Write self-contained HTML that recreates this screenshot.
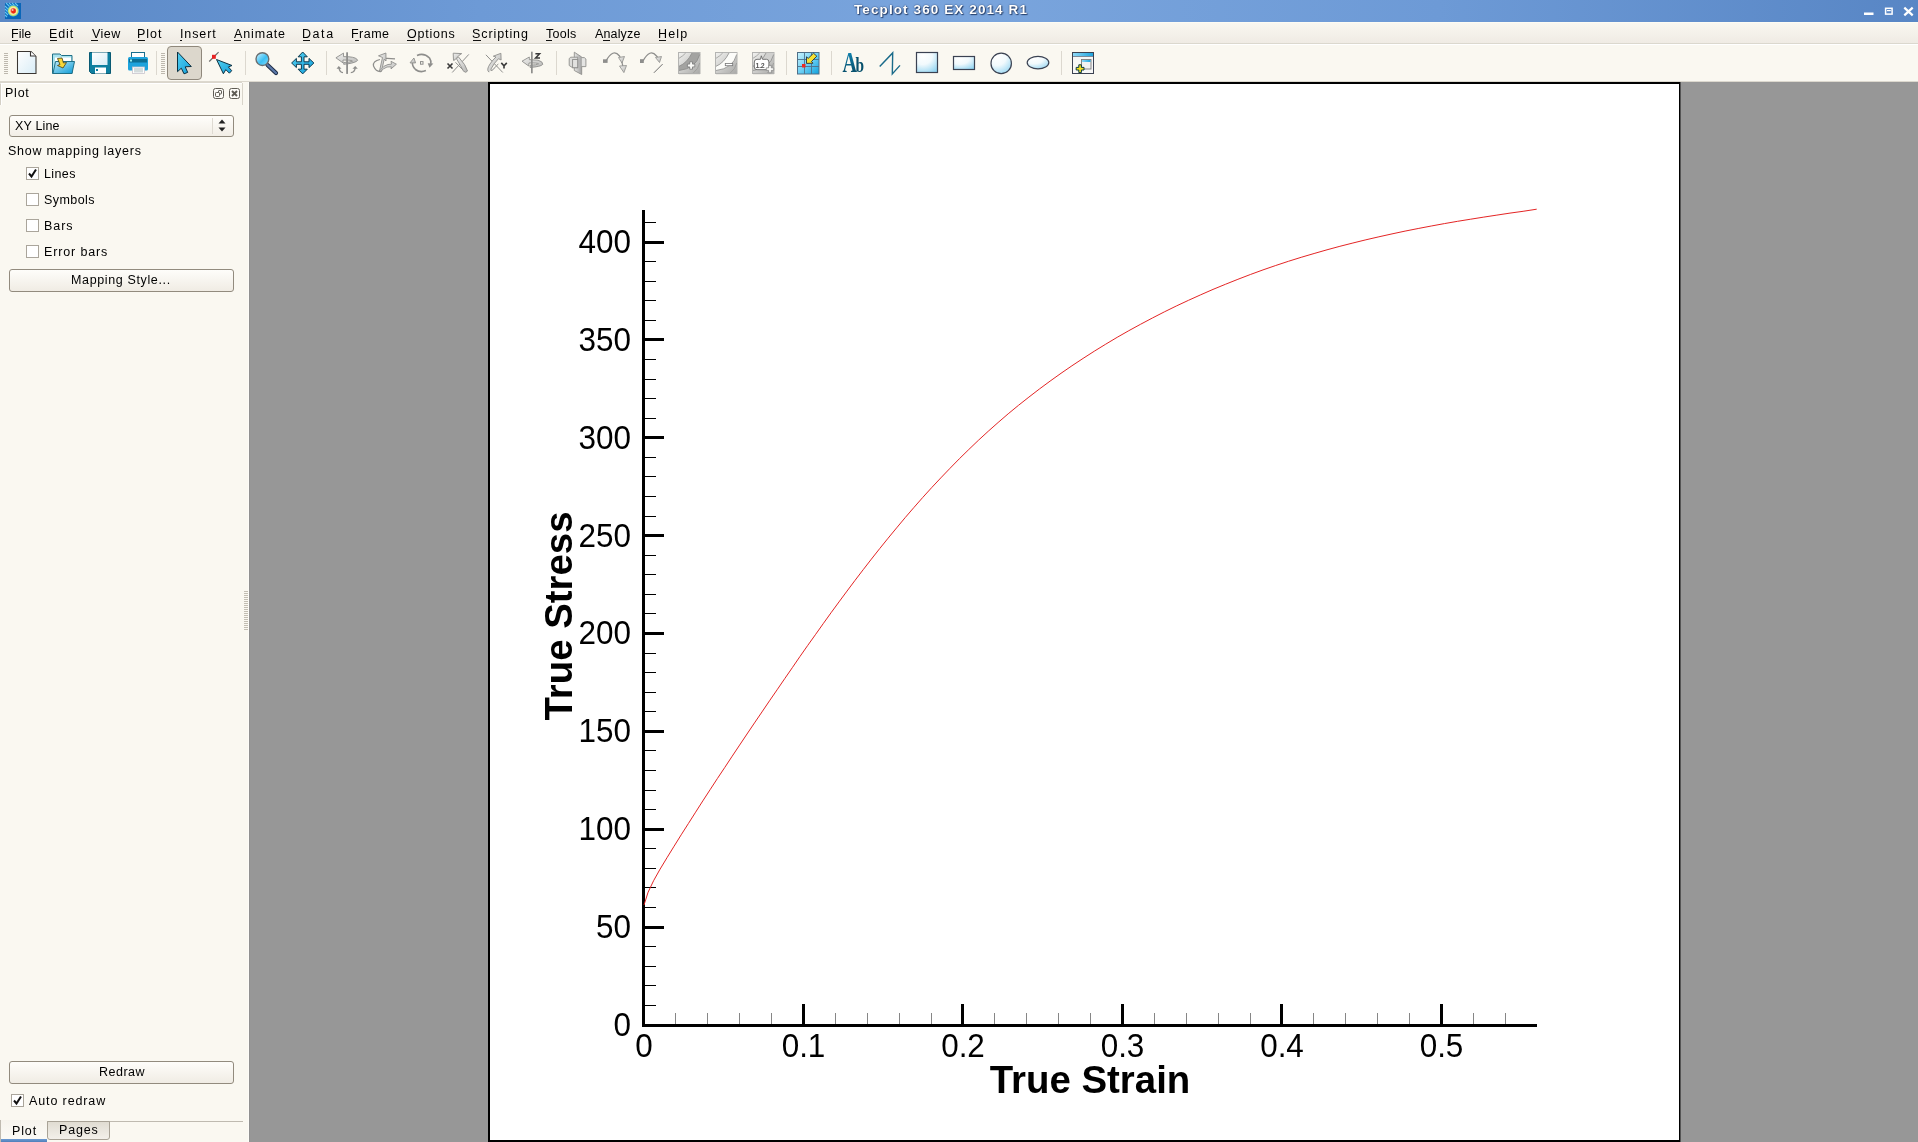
<!DOCTYPE html>
<html><head><meta charset="utf-8"><title>Tecplot 360 EX 2014 R1</title>
<style>
html,body{margin:0;padding:0}
body{width:1918px;height:1142px;overflow:hidden;position:relative;background:#979797;font-family:"Liberation Sans",sans-serif}
.a{position:absolute}
.t{position:absolute;white-space:nowrap;font-family:"Liberation Sans",sans-serif;will-change:transform}
</style></head><body>
<div class="a" style="left:0;top:0;width:1918px;height:22px;background:linear-gradient(90deg,#5a88c6 0%,#6d9ad6 25%,#7aa5dd 50%,#6d9ad6 75%,#5886c5 100%)"></div>
<div class="a" style="left:0;top:22px;width:1918px;height:21px;background:linear-gradient(#faf8f1,#efebe4)"></div>
<div class="a" style="left:0;top:22px;width:1918px;height:1px;background:#fdfcf4"></div>
<div class="a" style="left:0;top:43px;width:1918px;height:1px;background:#dbd8ce"></div>
<div class="a" style="left:0;top:44px;width:1918px;height:37px;background:#faf8f1"></div>
<div class="a" style="left:0;top:44px;width:1918px;height:1px;background:#ffffff"></div>
<div class="a" style="left:0;top:81px;width:1918px;height:1px;background:#dcd8ce"></div>
<div class="a" style="left:0;top:82px;width:249px;height:1060px;background:#faf8f1"></div>
<div class="a" style="left:248px;top:82px;width:1px;height:1060px;background:#fdfcf8"></div>
<div class="a" style="left:249px;top:82px;width:1669px;height:1060px;background:#979797"></div>
<div class="a" style="left:249px;top:82px;width:1px;height:1060px;background:#919191"></div>
<div class="a" style="left:0;top:82px;width:242px;height:1px;background:#dad6cc"></div>
<div class="a" style="left:488px;top:82px;width:1192px;height:1060px;box-sizing:border-box;background:#fff;border:2px solid #000;border-right-width:1px"></div>
<div class="a" style="left:1680px;top:82px;width:1px;height:1060px;background:#555"></div>
<svg class="a" style="left:0;top:0;will-change:transform" width="1918" height="90" viewBox="0 0 1918 90" font-family='"Liberation Sans", sans-serif'><defs>
<linearGradient id="gDoc" x1="0" y1="0" x2="1" y2="1"><stop offset="0" stop-color="#ffffff"/><stop offset="1" stop-color="#d8ecf6"/></linearGradient>
<linearGradient id="gBlue" x1="0" y1="0" x2="1" y2="1"><stop offset="0" stop-color="#bfeaf8"/><stop offset="1" stop-color="#0a9ad6"/></linearGradient>
<linearGradient id="gBlue2" x1="0" y1="0" x2="0" y2="1"><stop offset="0" stop-color="#45c3ee"/><stop offset="1" stop-color="#1196cf"/></linearGradient>
<linearGradient id="gCyan" x1="0" y1="0" x2="1" y2="1"><stop offset="0" stop-color="#54d0ef"/><stop offset="1" stop-color="#139fdc"/></linearGradient>
<linearGradient id="gShape" x1="0" y1="0" x2="0" y2="1"><stop offset="0" stop-color="#ffffff"/><stop offset="1" stop-color="#a9def4"/></linearGradient>
<linearGradient id="gGray" x1="0" y1="0" x2="1" y2="1"><stop offset="0" stop-color="#f2f2f0"/><stop offset="1" stop-color="#a8a8a6"/></linearGradient>
<linearGradient id="gGray2" x1="0" y1="0" x2="1" y2="0"><stop offset="0" stop-color="#e8e8e6"/><stop offset="1" stop-color="#a0a0a0"/></linearGradient>
<linearGradient id="gGray3" x1="0" y1="0" x2="1" y2="1"><stop offset="0" stop-color="#f0f0ee"/><stop offset="1" stop-color="#b8b8b6"/></linearGradient>
<linearGradient id="gAb" x1="0" y1="0" x2="0" y2="1"><stop offset="0" stop-color="#1592c4"/><stop offset=".6" stop-color="#0a5f80"/><stop offset="1" stop-color="#07445c"/></linearGradient>
<linearGradient id="gLens" x1="0" y1="0" x2="1" y2="1"><stop offset="0" stop-color="#d6f4ff"/><stop offset=".55" stop-color="#3cc0f4"/><stop offset="1" stop-color="#88dcfa"/></linearGradient>
<radialGradient id="gLogo" cx=".5" cy=".5" r=".5"><stop offset="0" stop-color="#ff3010"/><stop offset=".4" stop-color="#f0a080"/><stop offset=".55" stop-color="#faf0a0"/><stop offset=".75" stop-color="#b8e070"/><stop offset=".88" stop-color="#40b0e0" stop-opacity=".9"/><stop offset="1" stop-color="#0a66b8" stop-opacity="0"/></radialGradient>
</defs><rect x="5" y="3" width="16" height="16" fill="#0a66b8"/><path d="M6,3 L10,7 M9,3 L14,8 M12,3 L16,7 M15,3 L18,6 M5,6 L9,10 M5,9 L8,12 M5,12 L8,15 M5,15 L7,17" stroke="#62c6f2" stroke-width="1.1"/><circle cx="13.2" cy="10.8" r="6.3" fill="url(#gLogo)"/><circle cx="13.5" cy="11" r="2.4" fill="#ee2a10"/><circle cx="12.6" cy="10" r="1" fill="#f4c0b0"/><rect x="1864" y="12.5" width="9.5" height="2.5" fill="#fff"/><rect x="1885.6" y="8.3" width="6.5" height="5.8" fill="none" stroke="#fff" stroke-width="1.5"/><rect x="1887" y="10" width="3.8" height="1.2" fill="#fff"/><path d="M1904.3,7.6 L1912.7,15.4 M1912.7,7.6 L1904.3,15.4" stroke="#fff" stroke-width="2.2"/><rect x="4" y="53" width="4" height="1" fill="#bdb8ae"/><rect x="4" y="55" width="4" height="1" fill="#bdb8ae"/><rect x="4" y="57" width="4" height="1" fill="#bdb8ae"/><rect x="4" y="59" width="4" height="1" fill="#bdb8ae"/><rect x="4" y="61" width="4" height="1" fill="#bdb8ae"/><rect x="4" y="63" width="4" height="1" fill="#bdb8ae"/><rect x="4" y="65" width="4" height="1" fill="#bdb8ae"/><rect x="4" y="67" width="4" height="1" fill="#bdb8ae"/><rect x="4" y="69" width="4" height="1" fill="#bdb8ae"/><rect x="4" y="71" width="4" height="1" fill="#bdb8ae"/><rect x="4" y="73" width="4" height="1" fill="#bdb8ae"/><rect x="161" y="53" width="4" height="1" fill="#bdb8ae"/><rect x="161" y="55" width="4" height="1" fill="#bdb8ae"/><rect x="161" y="57" width="4" height="1" fill="#bdb8ae"/><rect x="161" y="59" width="4" height="1" fill="#bdb8ae"/><rect x="161" y="61" width="4" height="1" fill="#bdb8ae"/><rect x="161" y="63" width="4" height="1" fill="#bdb8ae"/><rect x="161" y="65" width="4" height="1" fill="#bdb8ae"/><rect x="161" y="67" width="4" height="1" fill="#bdb8ae"/><rect x="161" y="69" width="4" height="1" fill="#bdb8ae"/><rect x="161" y="71" width="4" height="1" fill="#bdb8ae"/><rect x="161" y="73" width="4" height="1" fill="#bdb8ae"/><rect x="156" y="51" width="1" height="24" fill="#dcd8cf"/><rect x="245" y="51" width="1" height="24" fill="#dcd8cf"/><rect x="326" y="51" width="1" height="24" fill="#dcd8cf"/><rect x="556" y="51" width="1" height="24" fill="#dcd8cf"/><rect x="786" y="51" width="1" height="24" fill="#dcd8cf"/><rect x="831" y="51" width="1" height="24" fill="#dcd8cf"/><rect x="1061" y="51" width="1" height="24" fill="#dcd8cf"/><rect x="167.5" y="46.5" width="34" height="33" rx="3.5" fill="#dcd7cc" stroke="#8f887c" stroke-width="1"/><path d="M17.5,51.5 H31 L36,56.5 V73.5 H17.5 Z" fill="url(#gDoc)" stroke="#3a3632" stroke-width="1.05"/><path d="M30.5,51.5 V56 H35.5" fill="#fff" stroke="#3a3632" stroke-width="1.1"/><path d="M52.5,73.5 V54 H60 L61.5,55.5 H72 V73.5 Z" fill="#a8e2ee" stroke="#1f6f86" stroke-width="1"/><rect x="55" y="57.5" width="16" height="5" fill="#fff"/><path d="M53,73.5 L55.5,61.5 H74.5 L72,73.5 Z" fill="url(#gBlue)" stroke="#1f6f86" stroke-width="1"/><path d="M57.5,58.5 L62,58 L63.5,63 L66.5,62.5 L63,68 L57.5,65.5 L60,64.5 Z" fill="#f7d83a" stroke="#4a3d10" stroke-width=".8"/><path d="M89.5,52.5 H110.5 V73.5 H91.5 L89.5,71.5 Z" fill="#0e7fa0" stroke="#0a5a73" stroke-width="1"/><rect x="92" y="52.5" width="15.5" height="12.5" fill="url(#gDoc)"/><rect x="95" y="67.5" width="11" height="6" fill="#fff"/><rect x="96" y="69" width="2" height="2" fill="#0e7fa0"/><rect x="131.5" y="52.5" width="13" height="6" fill="#fff" stroke="#1a6f8e" stroke-width="1"/><rect x="128" y="57" width="20" height="13.5" rx="1.5" fill="#1ea3dc"/><rect x="129" y="59" width="18" height="3.5" fill="#0d6f94"/><rect x="130" y="59.5" width="2" height="2" fill="#9ee"/><rect x="132.5" y="67" width="12" height="6.5" fill="#fff" stroke="#c8c4cc" stroke-width=".8"/><rect x="134" y="68" width="9" height="4.5" fill="#d4dcdc"/><path d="M177.5,52 V71.7 L181.3,68.2 L184,73.8 L187.7,72.4 L185.2,66.8 L191.3,66.5 Z" fill="url(#gCyan)" stroke="#0c2f40" stroke-width="1"/><path d="M209.2,61.5 L218.6,52.1" stroke="#6a6a6a" stroke-width="1.2"/><rect x="212" y="54.8" width="3.8" height="4" fill="#e82222"/><path d="M216.5,59.5 L232,65.5 L228.4,66.9 L231.7,70.7 L229.4,73.2 L225.8,69.6 L223.4,73.8 Z" fill="url(#gCyan)" stroke="#0c2f40" stroke-width="1"/><path d="M267.5,65 L276,73" stroke="#1c2a44" stroke-width="4.2" stroke-linecap="round"/><path d="M267.5,65 L276,73" stroke="#5a78a8" stroke-width="2.4" stroke-linecap="round"/><circle cx="262.4" cy="59.1" r="6.4" fill="url(#gLens)" stroke="#6a6e70" stroke-width="1.4"/><path d="M302.7,52 L307.3,56.8 H304 V61.8 H309 V58.4 L313.9,63 L309,67.6 V64.3 H304 V69.2 H307.3 L302.7,73.9 L298.1,69.2 H301.4 V64.3 H296.4 V67.6 L291.6,63 L296.4,58.4 V61.8 H301.4 V56.8 H298.1 Z" fill="url(#gCyan)" stroke="#0d3a50" stroke-width="1" stroke-linejoin="miter"/><path d="M343.7,64.3 L348,63.8 Q356,62.5 357.6,60.4 Q357,57.5 349,56.8 L343.5,56.6 V53.1 L335.9,57.8 L343,62.9 V60 L349,60.2 Q353,60.5 352.5,61.2 Q350,62.3 343.7,62.5 Z" fill="url(#gGray3)" stroke="#8e8e8c" stroke-width=".9"/><rect x="346.2" y="52.3" width="1.8" height="21.6" fill="#8e8e8c"/><path d="M343,72.6 Q339.5,72.5 339,67.5 M350.8,72.6 Q354.8,72.5 355.2,67.5" fill="none" stroke="#8e8e8c" stroke-width="1.4"/><path d="M336.5,68.7 L338.8,66 L341.5,68.7 Z M352.5,68.7 L355.2,66 L357.8,68.7 Z" fill="#8e8e8c"/><path d="M381,71.5 Q376,72 373.5,66 Q372.5,61 380,59.5 M383,58.5 Q388,58 395,58.8" fill="none" stroke="#8e8e8c" stroke-width="1.2"/><path d="M379.5,71 L382.5,57.5 L378.5,55.8 L385.9,53 L386,61 L384.2,59.2 L381.5,71.5 Z" fill="url(#gGray3)" stroke="#8e8e8c" stroke-width=".9"/><path d="M380,70.5 Q384,65 388,64.5 L391.5,64.2 L391,61.3 L396.4,64.2 L391,68.9 L391.3,66.8 L387,67 Q383,68.5 380,72 Z" fill="url(#gGray3)" stroke="#8e8e8c" stroke-width=".9"/><path d="M417,55.4 Q424,52.5 429.5,58 Q431.5,61 430.8,64" fill="none" stroke="#8e8e8c" stroke-width="1.6"/><path d="M427.7,63.2 L433.4,63.4 L429.5,67.7 Z" fill="#8e8e8c"/><path d="M425.9,70.6 Q420,73 415.5,69.5 Q412,66.5 412.4,61.5" fill="none" stroke="#8e8e8c" stroke-width="1.6"/><path d="M410,62.9 L413.9,58 L415.6,62.9 Z" fill="url(#gGray3)" stroke="#8e8e8c" stroke-width=".9"/><rect x="420.5" y="61.6" width="2.5" height="2.6" fill="none" stroke="#8e8e8c" stroke-width="1"/><path d="M447.5,63.5 L452.5,68.5 M452.5,63.5 L447.5,68.5" stroke="#3a3a3a" stroke-width="1.6"/><path d="M452.2,72.5 L468.8,54.4" stroke="#8e8e8c" stroke-width="1"/><path d="M455.5,62.3 L463,70" stroke="#8e8e8c" stroke-width="1"/><path d="M456.4,58.6 L458.5,57 Q466,65 467.5,71 Q466,73.5 463.5,71.2 Q461,66 456.4,58.6 Z" fill="url(#gGray3)" stroke="#8e8e8c" stroke-width=".9"/><path d="M453.2,53.2 L461.7,53.6 L458.8,55.5 L455,59.8 L453.5,60.4 Z" fill="url(#gGray3)" stroke="#8e8e8c" stroke-width=".9"/><path d="M485.9,54.8 L502.8,72.5" stroke="#8e8e8c" stroke-width="1"/><path d="M489,72.2 Q486,70 490,64 Q493,59.5 496,57 L493.3,56.2 L500.9,53.3 L501.1,60 L498.5,58.7 Q494,63 491,69 Q490.5,71 492,70.5 Q495,68 498.3,63.8" fill="url(#gGray3)" stroke="#8e8e8c" stroke-width=".9"/><path d="M501.3,62.9 L504,65.8 L506.8,62.9 M504,65.8 V68.6" fill="none" stroke="#3a3a3a" stroke-width="1.6"/><path d="M528.7,66 L522,61.2 L529.3,57 V59.6 L538,60.2 Q543,61.5 542.8,64.3 Q541,66.8 530,67.4 V65.2 Q537,65 538.5,63.8 Q537.5,62.8 529,63 Z" fill="url(#gGray3)" stroke="#8e8e8c" stroke-width=".9"/><rect x="531" y="51.7" width="1.7" height="21.6" fill="#8e8e8c"/><path d="M535.4,53.8 H539.6 L535.6,58 H540" fill="none" stroke="#3a3a3a" stroke-width="1.5"/><path d="M574.3,52.2 L581.7,57 V74.5 L574.3,70.5 Z" fill="url(#gGray2)" stroke="#8e8e8c" stroke-width=".9"/><path d="M569.2,58.5 L570.8,57.2 H577.7 V67.7 H572.6 L569.2,65.5 Z" fill="#dcdcda" stroke="#8e8e8c" stroke-width=".9"/><rect x="572.6" y="59.5" width="5.1" height="8.2" fill="#e2e2e0" stroke="#8e8e8c" stroke-width=".9"/><path d="M581.7,57.6 H584.3 L585.9,59 V66.6 H581.7" fill="#e4e4e2" stroke="#8e8e8c" stroke-width=".9"/><rect x="603" y="59.3" width="4.6" height="3.6" fill="#8e8e8c"/><path d="M606,61 Q613,48 619.5,56 Q622,60 623.5,70" fill="none" stroke="#8e8e8c" stroke-width="1.3"/><path d="M618.5,57.5 L624.5,56.5 L622,63 Z" fill="url(#gGray3)" stroke="#8e8e8c" stroke-width=".8"/><path d="M619.5,66 L626.5,65.5 L623.9,72.6 Z" fill="url(#gGray3)" stroke="#8e8e8c" stroke-width=".8"/><rect x="640" y="59.2" width="3.8" height="3.8" fill="#8e8e8c"/><path d="M643,61 Q650,48 656.5,56 Q658,57.5 659,60" fill="none" stroke="#8e8e8c" stroke-width="1.3"/><path d="M655.5,57.5 L661.5,56.5 L659.5,62.5 Z" fill="url(#gGray3)" stroke="#8e8e8c" stroke-width=".8"/><path d="M653.9,72.8 L662.6,64.1" stroke="#6e6e6e" stroke-width="1"/><rect x="678.5" y="52.5" width="21.5" height="21" fill="url(#gGray)" stroke="#b4b4b2" stroke-width="1"/><path d="M679,66.3 Q687,63 692,53 L699.7,53 L699.7,54.5 Q696,68.5 679,70.5 Z" fill="#a3a3a1"/><path d="M679,66.3 Q687,63 692,53 M699.7,54.5 Q696,68.5 679,70.5" fill="none" stroke="#8c8c8a" stroke-width=".8"/><path d="M679,58.3 Q683,56 685.7,53" fill="none" stroke="#9a9a98" stroke-width=".8"/><path d="M693,73.3 Q698.5,69 699.7,63" fill="none" stroke="#9a9a98" stroke-width=".8"/><rect x="679" y="73" width="21" height="1.2" fill="#b0b0ae"/><path d="M689.7,61.8 h2.8 v2.3 h2.3 v2.8 h-2.3 v2.3 h-2.8 v-2.3 h-2.3 v-2.8 h2.3 z" fill="#fbfbf8" stroke="#777" stroke-width=".8"/><rect x="715.5" y="52.5" width="21.5" height="21" fill="url(#gGray)" stroke="#b4b4b2" stroke-width="1"/><path d="M716,66.3 Q724,63 729,53 L736.7,53 L736.7,54.5 Q733,68.5 716,70.5 Z" fill="#fcfcf9"/><path d="M716,66.3 Q724,63 729,53 M736.7,54.5 Q733,68.5 716,70.5" fill="none" stroke="#8c8c8a" stroke-width=".8"/><path d="M716,58.3 Q720,56 722.7,53" fill="none" stroke="#9a9a98" stroke-width=".8"/><path d="M730,73.3 Q735.5,69 736.7,63" fill="none" stroke="#9a9a98" stroke-width=".8"/><rect x="716" y="73" width="21" height="1.2" fill="#b0b0ae"/><rect x="725.3" y="63.5" width="7.4" height="2.2" fill="#fff" stroke="#777" stroke-width=".8"/><rect x="752.5" y="52.5" width="21.5" height="21" fill="url(#gGray)" stroke="#b4b4b2" stroke-width="1"/><path d="M753,66.3 Q761,63 766,53 L773.7,53 L773.7,54.5 Q770,68.5 753,70.5 Z" fill="#d0d0ce"/><path d="M753,66.3 Q761,63 766,53 M773.7,54.5 Q770,68.5 753,70.5" fill="none" stroke="#8c8c8a" stroke-width=".8"/><path d="M753,58.3 Q757,56 759.7,53" fill="none" stroke="#9a9a98" stroke-width=".8"/><path d="M767,73.3 Q772.5,69 773.7,63" fill="none" stroke="#9a9a98" stroke-width=".8"/><rect x="753" y="73" width="21" height="1.2" fill="#b0b0ae"/><path d="M757,59.3 H760.5 L761.3,55.8 L762.5,59.3 H766.5 Q768.9,59.3 768.9,62 V67 Q768.9,69.7 766.5,69.7 H757 Q754.3,69.7 754.3,67 V62 Q754.3,59.3 757,59.3 Z" fill="#fff" stroke="#666" stroke-width=".9"/><text x="755.6" y="67.6" font-size="7" font-weight="bold" fill="#555" letter-spacing="-.3">1.2</text><path d="M768.7,65.4 h2.6 v2.4 h2.4 v2.6 h-2.4 v2.4 h-2.6 v-2.4 h-2.4 v-2.6 h2.4 z" fill="#fbfbf8" stroke="#888" stroke-width=".8"/><linearGradient id="gGrid" x1="0" y1="0" x2="1" y2="1"><stop offset="0" stop-color="#c8f2fd"/><stop offset=".5" stop-color="#6fd0f4"/><stop offset="1" stop-color="#0ea0dc"/></linearGradient><rect x="797.5" y="52.5" width="21.5" height="21.5" fill="url(#gGrid)" stroke="#4f6f88" stroke-width="1"/><path d="M804.5,53 V74 M811.5,53 V74 M798,59.5 H819 M798,66.5 H819" stroke="#4f6f88" stroke-width=".9"/><rect x="802" y="64" width="3.5" height="3.5" fill="#ee2a22"/><path d="M816.8,56.2 L811.5,61.5 L813,63.2 L806.5,63.4 L806.5,56.8 L808.2,58.4 L813.5,53.2 Z" fill="#f7e030" stroke="#1f2f44" stroke-width=".9" stroke-linejoin="miter"/><text transform="translate(842.6,72.2) scale(.69,1)" x="0" y="0" font-family="'Liberation Serif', serif" font-size="29" font-weight="bold" fill="url(#gAb)">A</text><text transform="translate(855.6,72.2) scale(.7,1)" x="0" y="0" font-family="'Liberation Serif', serif" font-size="22" font-weight="bold" fill="#07506c">b</text><path d="M879.7,66.6 L892.7,52.9 L892.3,73.9 L900,65.4" fill="none" stroke="#1a6b8a" stroke-width="1.4"/><radialGradient id="gShp" cx=".3" cy=".15" r="1"><stop offset="0" stop-color="#ffffff"/><stop offset=".45" stop-color="#f2fafd"/><stop offset="1" stop-color="#8fd3f1"/></radialGradient><rect x="916.5" y="52.5" width="21" height="20" fill="url(#gShp)" stroke="#3b4252" stroke-width="1.2"/><rect x="953.5" y="56.5" width="21" height="13" fill="url(#gShp)" stroke="#3b4252" stroke-width="1.2"/><circle cx="1001.2" cy="63.4" r="10.2" fill="url(#gShp)" stroke="#3b4252" stroke-width="1.2"/><ellipse cx="1038" cy="62.6" rx="10.8" ry="6.3" fill="url(#gShp)" stroke="#3b4252" stroke-width="1.2"/><linearGradient id="gBar" x1="0" y1="0" x2="1" y2="0"><stop offset="0" stop-color="#8fd8f6"/><stop offset="1" stop-color="#1ea4de"/></linearGradient><rect x="1072.5" y="52.5" width="21" height="21" fill="#f7f7f7" stroke="#3b4252" stroke-width="1"/><rect x="1073" y="53" width="20" height="3" fill="url(#gBar)"/><rect x="1073" y="56" width="20" height="1" fill="#7c8a98"/><rect x="1081.5" y="59.5" width="9.5" height="9.5" fill="#f2f2f2" stroke="#7a7a7a" stroke-width=".9"/><rect x="1082" y="60" width="8.5" height="2" fill="url(#gBar)"/><path d="M1078.8,64.8 h2.6 v2.6 h2.6 v2.6 h-2.6 v2.6 h-2.6 v-2.6 h-2.6 v-2.6 h2.6 z" fill="#f5e020" stroke="#0a3a40" stroke-width="1"/></svg>
<div class="a" style="left:12px;top:40px;width:6px;height:1px;background:#111"></div><div class="a" style="left:50px;top:40px;width:7px;height:1px;background:#111"></div><div class="a" style="left:91px;top:40px;width:7px;height:1px;background:#111"></div><div class="a" style="left:138px;top:40px;width:7px;height:1px;background:#111"></div><div class="a" style="left:180px;top:40px;width:2px;height:1px;background:#111"></div><div class="a" style="left:234px;top:40px;width:7px;height:1px;background:#111"></div><div class="a" style="left:303px;top:40px;width:7px;height:1px;background:#111"></div><div class="a" style="left:355px;top:40px;width:4px;height:1px;background:#111"></div><div class="a" style="left:407px;top:40px;width:8px;height:1px;background:#111"></div><div class="a" style="left:473px;top:40px;width:8px;height:1px;background:#111"></div><div class="a" style="left:546px;top:40px;width:6px;height:1px;background:#111"></div><div class="a" style="left:603px;top:40px;width:7px;height:1px;background:#111"></div><div class="a" style="left:659px;top:40px;width:7px;height:1px;background:#111"></div>
<div class="a" style="left:0;top:83px;width:242px;height:22px;border-left:1px solid #d3cfc5;border-top:1px solid #fff;box-sizing:border-box"></div><div class="a" style="left:1px;top:84px;width:1px;height:21px;background:#fff"></div><div class="a" style="left:242px;top:83px;width:1px;height:22px;background:#d8d4ca"></div><svg class="a" style="left:210px;top:86px" width="34" height="16" viewBox="210 86 34 16"><rect x="213.5" y="88.5" width="10" height="10" rx="2" fill="#fdfcf8" stroke="#5f5c55" stroke-width="1"/><rect x="218.5" y="90.5" width="3" height="3.5" rx=".6" fill="none" stroke="#5f5c55" stroke-width="1"/><rect x="215.5" y="92.5" width="4" height="4" rx=".8" fill="#fdfcf8" stroke="#5f5c55" stroke-width="1"/><rect x="229.5" y="88.5" width="10" height="10" rx="2" fill="#fdfcf8" stroke="#5f5c55" stroke-width="1"/><path d="M232,91 L237,96 M237,91 L232,96" stroke="#5f5c55" stroke-width="1.9"/></svg><div class="a" style="left:9px;top:115px;width:225px;height:22px;box-sizing:border-box;border:1px solid #928b7e;border-radius:3px;background:linear-gradient(#fffefb,#f2eee6)"></div><div class="a" style="left:212px;top:118px;width:1px;height:16px;background:#dedad2"></div><svg class="a" style="left:216px;top:118px" width="12" height="16" viewBox="0 0 12 16"><path d="M2.5,5.5 L6,1.5 L9.5,5.5 Z M2.5,9.5 L6,13.5 L9.5,9.5 Z" fill="#222"/></svg><div class="a" style="left:26px;top:167px;width:13px;height:13px;box-sizing:border-box;border:1px solid #aaa59b;background:#fff"></div><svg class="a" style="left:26px;top:167px" width="13" height="13" viewBox="0 0 13 13"><path d="M3,6.5 L5.5,9.5 L10,2.5" fill="none" stroke="#111" stroke-width="2"/></svg><div class="a" style="left:26px;top:193px;width:13px;height:13px;box-sizing:border-box;border:1px solid #aaa59b;background:#fff"></div><div class="a" style="left:26px;top:219px;width:13px;height:13px;box-sizing:border-box;border:1px solid #aaa59b;background:#fff"></div><div class="a" style="left:26px;top:245px;width:13px;height:13px;box-sizing:border-box;border:1px solid #aaa59b;background:#fff"></div><div class="a" style="left:9px;top:269px;width:225px;height:23px;box-sizing:border-box;border:1px solid #928b7e;border-radius:3px;background:linear-gradient(#fefdfa,#f0ece4)"></div><div class="a" style="left:9px;top:1061px;width:225px;height:23px;box-sizing:border-box;border:1px solid #928b7e;border-radius:3px;background:linear-gradient(#fefdfa,#f0ece4)"></div><div class="a" style="left:11px;top:1094px;width:13px;height:13px;box-sizing:border-box;border:1px solid #aaa59b;background:#fff"></div><svg class="a" style="left:11px;top:1094px" width="13" height="13" viewBox="0 0 13 13"><path d="M3,6.5 L5.5,9.5 L10,2.5" fill="none" stroke="#111" stroke-width="2"/></svg><div class="a" style="left:47px;top:1121px;width:196px;height:1px;background:#bfbab0"></div><div class="a" style="left:0;top:1120px;width:47px;height:22px;box-sizing:border-box;border-left:1px solid #bfbab0;background:linear-gradient(#f6f3ec,#fcfbf7)"></div><div class="a" style="left:1px;top:1139px;width:46px;height:3px;background:linear-gradient(#6d9ad2,#4f7fba)"></div><div class="a" style="left:47px;top:1121px;width:63px;height:19px;box-sizing:border-box;border:1px solid #a8a296;border-radius:0 0 3px 3px;background:linear-gradient(#e0dcd2,#f3f0ea)"></div><div class="a" style="left:244px;top:591px;width:4px;height:1px;background:#c2bdb2"></div><div class="a" style="left:244px;top:593px;width:4px;height:1px;background:#c2bdb2"></div><div class="a" style="left:244px;top:595px;width:4px;height:1px;background:#c2bdb2"></div><div class="a" style="left:244px;top:597px;width:4px;height:1px;background:#c2bdb2"></div><div class="a" style="left:244px;top:599px;width:4px;height:1px;background:#c2bdb2"></div><div class="a" style="left:244px;top:601px;width:4px;height:1px;background:#c2bdb2"></div><div class="a" style="left:244px;top:603px;width:4px;height:1px;background:#c2bdb2"></div><div class="a" style="left:244px;top:605px;width:4px;height:1px;background:#c2bdb2"></div><div class="a" style="left:244px;top:607px;width:4px;height:1px;background:#c2bdb2"></div><div class="a" style="left:244px;top:609px;width:4px;height:1px;background:#c2bdb2"></div><div class="a" style="left:244px;top:611px;width:4px;height:1px;background:#c2bdb2"></div><div class="a" style="left:244px;top:613px;width:4px;height:1px;background:#c2bdb2"></div><div class="a" style="left:244px;top:615px;width:4px;height:1px;background:#c2bdb2"></div><div class="a" style="left:244px;top:617px;width:4px;height:1px;background:#c2bdb2"></div><div class="a" style="left:244px;top:619px;width:4px;height:1px;background:#c2bdb2"></div><div class="a" style="left:244px;top:621px;width:4px;height:1px;background:#c2bdb2"></div><div class="a" style="left:244px;top:623px;width:4px;height:1px;background:#c2bdb2"></div><div class="a" style="left:244px;top:625px;width:4px;height:1px;background:#c2bdb2"></div><div class="a" style="left:244px;top:627px;width:4px;height:1px;background:#c2bdb2"></div><div class="a" style="left:244px;top:629px;width:4px;height:1px;background:#c2bdb2"></div>
<svg class="a" style="left:0;top:0" width="1918" height="1142" viewBox="0 0 1918 1142" font-family='"Liberation Sans", sans-serif' shape-rendering="auto"><rect x="642" y="210" width="3" height="817" fill="#000"/><rect x="643" y="1024" width="894" height="3" fill="#000"/><rect x="645" y="1005" width="11" height="1" fill="#000"/><rect x="645" y="985" width="11" height="1" fill="#000"/><rect x="645" y="966" width="11" height="1" fill="#000"/><rect x="645" y="946" width="11" height="1" fill="#000"/><rect x="645" y="926" width="19" height="3" fill="#000"/><rect x="645" y="907" width="11" height="1" fill="#000"/><rect x="645" y="887" width="11" height="1" fill="#000"/><rect x="645" y="868" width="11" height="1" fill="#000"/><rect x="645" y="848" width="11" height="1" fill="#000"/><rect x="645" y="828" width="19" height="3" fill="#000"/><rect x="645" y="809" width="11" height="1" fill="#000"/><rect x="645" y="790" width="11" height="1" fill="#000"/><rect x="645" y="770" width="11" height="1" fill="#000"/><rect x="645" y="750" width="11" height="1" fill="#000"/><rect x="645" y="730" width="19" height="3" fill="#000"/><rect x="645" y="711" width="11" height="1" fill="#000"/><rect x="645" y="692" width="11" height="1" fill="#000"/><rect x="645" y="672" width="11" height="1" fill="#000"/><rect x="645" y="653" width="11" height="1" fill="#000"/><rect x="645" y="632" width="19" height="3" fill="#000"/><rect x="645" y="613" width="11" height="1" fill="#000"/><rect x="645" y="594" width="11" height="1" fill="#000"/><rect x="645" y="574" width="11" height="1" fill="#000"/><rect x="645" y="555" width="11" height="1" fill="#000"/><rect x="645" y="534" width="19" height="3" fill="#000"/><rect x="645" y="516" width="11" height="1" fill="#000"/><rect x="645" y="496" width="11" height="1" fill="#000"/><rect x="645" y="476" width="11" height="1" fill="#000"/><rect x="645" y="457" width="11" height="1" fill="#000"/><rect x="645" y="436" width="19" height="3" fill="#000"/><rect x="645" y="418" width="11" height="1" fill="#000"/><rect x="645" y="398" width="11" height="1" fill="#000"/><rect x="645" y="379" width="11" height="1" fill="#000"/><rect x="645" y="359" width="11" height="1" fill="#000"/><rect x="645" y="338" width="19" height="3" fill="#000"/><rect x="645" y="320" width="11" height="1" fill="#000"/><rect x="645" y="300" width="11" height="1" fill="#000"/><rect x="645" y="281" width="11" height="1" fill="#000"/><rect x="645" y="261" width="11" height="1" fill="#000"/><rect x="645" y="241" width="19" height="3" fill="#000"/><rect x="645" y="222" width="11" height="1" fill="#000"/><rect x="675" y="1013" width="1" height="11" fill="#868686"/><rect x="707" y="1013" width="1" height="11" fill="#868686"/><rect x="739" y="1013" width="1" height="11" fill="#868686"/><rect x="771" y="1013" width="1" height="11" fill="#868686"/><rect x="802" y="1004" width="3" height="20" fill="#000"/><rect x="835" y="1013" width="1" height="11" fill="#868686"/><rect x="867" y="1013" width="1" height="11" fill="#868686"/><rect x="899" y="1013" width="1" height="11" fill="#868686"/><rect x="931" y="1013" width="1" height="11" fill="#868686"/><rect x="961" y="1004" width="3" height="20" fill="#000"/><rect x="994" y="1013" width="1" height="11" fill="#868686"/><rect x="1026" y="1013" width="1" height="11" fill="#868686"/><rect x="1058" y="1013" width="1" height="11" fill="#868686"/><rect x="1090" y="1013" width="1" height="11" fill="#868686"/><rect x="1121" y="1004" width="3" height="20" fill="#000"/><rect x="1154" y="1013" width="1" height="11" fill="#868686"/><rect x="1186" y="1013" width="1" height="11" fill="#868686"/><rect x="1218" y="1013" width="1" height="11" fill="#868686"/><rect x="1250" y="1013" width="1" height="11" fill="#868686"/><rect x="1280" y="1004" width="3" height="20" fill="#000"/><rect x="1313" y="1013" width="1" height="11" fill="#868686"/><rect x="1345" y="1013" width="1" height="11" fill="#868686"/><rect x="1377" y="1013" width="1" height="11" fill="#868686"/><rect x="1409" y="1013" width="1" height="11" fill="#868686"/><rect x="1440" y="1004" width="3" height="20" fill="#000"/><rect x="1473" y="1013" width="1" height="11" fill="#868686"/><rect x="1505" y="1013" width="1" height="11" fill="#868686"/><text transform="translate(631,1035.9) scale(.965,1)" text-anchor="end" font-size="32.6">0</text><text transform="translate(631,938.0) scale(.965,1)" text-anchor="end" font-size="32.6">50</text><text transform="translate(631,840.1) scale(.965,1)" text-anchor="end" font-size="32.6">100</text><text transform="translate(631,742.3) scale(.965,1)" text-anchor="end" font-size="32.6">150</text><text transform="translate(631,644.4) scale(.965,1)" text-anchor="end" font-size="32.6">200</text><text transform="translate(631,546.5) scale(.965,1)" text-anchor="end" font-size="32.6">250</text><text transform="translate(631,448.6) scale(.965,1)" text-anchor="end" font-size="32.6">300</text><text transform="translate(631,350.8) scale(.965,1)" text-anchor="end" font-size="32.6">350</text><text transform="translate(631,252.9) scale(.965,1)" text-anchor="end" font-size="32.6">400</text><text transform="translate(644.0,1057) scale(.965,1)" text-anchor="middle" font-size="32.6">0</text><text transform="translate(803.5,1057) scale(.965,1)" text-anchor="middle" font-size="32.6">0.1</text><text transform="translate(963.0,1057) scale(.965,1)" text-anchor="middle" font-size="32.6">0.2</text><text transform="translate(1122.5,1057) scale(.965,1)" text-anchor="middle" font-size="32.6">0.3</text><text transform="translate(1282.0,1057) scale(.965,1)" text-anchor="middle" font-size="32.6">0.4</text><text transform="translate(1441.5,1057) scale(.965,1)" text-anchor="middle" font-size="32.6">0.5</text><text x="1090" y="1093" text-anchor="middle" font-size="38.4" font-weight="bold">True Strain</text><text transform="translate(572,616) rotate(-90)" x="0" y="0" text-anchor="middle" font-size="38.4" font-weight="bold">True Stress</text><path d="M644.0,905.0 L648.1,892.2 L653.6,880.7 L660.1,869.1 L667.0,857.7 L674.1,846.2 L681.2,834.8 L688.4,823.5 L695.6,812.2 L702.8,800.9 L710.1,789.7 L717.4,778.5 L724.8,767.4 L732.2,756.2 L739.6,745.1 L747.0,734.0 L754.5,722.9 L762.0,711.9 L769.5,700.8 L777.1,689.8 L784.7,678.7 L792.3,667.7 L799.9,656.6 L807.6,645.6 L815.4,634.7 L823.2,623.7 L831.0,612.8 L839.0,601.9 L847.0,591.1 L855.0,580.4 L863.2,569.7 L871.4,559.1 L879.7,548.6 L888.1,538.2 L896.6,527.9 L905.2,517.6 L913.9,507.5 L922.7,497.5 L931.7,487.6 L940.8,477.9 L950.0,468.3 L959.3,458.8 L968.8,449.5 L978.4,440.3 L988.2,431.3 L998.1,422.5 L1008.2,413.8 L1018.4,405.4 L1028.9,397.1 L1039.4,389.0 L1050.1,381.1 L1061.0,373.3 L1071.9,365.8 L1083.1,358.4 L1094.3,351.2 L1105.7,344.2 L1117.2,337.3 L1128.8,330.7 L1140.5,324.3 L1152.4,318.0 L1164.3,311.9 L1176.3,306.0 L1188.5,300.3 L1200.7,294.8 L1213.0,289.4 L1225.4,284.3 L1237.9,279.3 L1250.4,274.5 L1263.0,269.9 L1275.7,265.5 L1288.4,261.3 L1301.2,257.3 L1314.1,253.5 L1327.0,249.8 L1339.9,246.3 L1352.9,243.0 L1365.9,239.8 L1378.9,236.8 L1392.0,233.9 L1405.1,231.1 L1418.2,228.5 L1431.3,226.0 L1444.4,223.6 L1457.6,221.3 L1470.7,219.2 L1483.8,217.1 L1496.9,215.1 L1510.0,213.1 L1523.1,211.3 L1536.7,209.2" fill="none" stroke="#e21818" stroke-width=".95"/></svg>
<div class="t" style="left:11.30px;top:28.02px;font-size:12.5px;line-height:12.5px;font-weight:normal;color:#000;letter-spacing:0.000px;">File</div><div class="t" style="left:49.40px;top:28.02px;font-size:12.5px;line-height:12.5px;font-weight:normal;color:#000;letter-spacing:0.867px;">Edit</div><div class="t" style="left:91.60px;top:28.02px;font-size:12.5px;line-height:12.5px;font-weight:normal;color:#000;letter-spacing:0.467px;">View</div><div class="t" style="left:137.20px;top:28.02px;font-size:12.5px;line-height:12.5px;font-weight:normal;color:#000;letter-spacing:0.967px;">Plot</div><div class="t" style="left:179.50px;top:28.02px;font-size:12.5px;line-height:12.5px;font-weight:normal;color:#000;letter-spacing:0.900px;">Insert</div><div class="t" style="left:233.90px;top:28.02px;font-size:12.5px;line-height:12.5px;font-weight:normal;color:#000;letter-spacing:0.867px;">Animate</div><div class="t" style="left:302.00px;top:28.02px;font-size:12.5px;line-height:12.5px;font-weight:normal;color:#000;letter-spacing:1.567px;">Data</div><div class="t" style="left:350.50px;top:28.02px;font-size:12.5px;line-height:12.5px;font-weight:normal;color:#000;letter-spacing:0.475px;">Frame</div><div class="t" style="left:407.00px;top:28.02px;font-size:12.5px;line-height:12.5px;font-weight:normal;color:#000;letter-spacing:0.783px;">Options</div><div class="t" style="left:472.20px;top:28.02px;font-size:12.5px;line-height:12.5px;font-weight:normal;color:#000;letter-spacing:0.913px;">Scripting</div><div class="t" style="left:546.30px;top:28.02px;font-size:12.5px;line-height:12.5px;font-weight:normal;color:#000;letter-spacing:0.275px;">Tools</div><div class="t" style="left:595.20px;top:28.02px;font-size:12.5px;line-height:12.5px;font-weight:normal;color:#000;letter-spacing:0.150px;">Analyze</div><div class="t" style="left:657.90px;top:28.02px;font-size:12.5px;line-height:12.5px;font-weight:normal;color:#000;letter-spacing:1.133px;">Help</div><div class="t" style="left:853.60px;top:3.37px;font-size:13.5px;line-height:13.5px;font-weight:bold;color:#fff;letter-spacing:1.100px;text-shadow:0 0 1.5px rgba(10,30,70,.9),1px 1px 1px rgba(10,30,70,.7);">Tecplot 360 EX 2014 R1</div><div class="t" style="left:4.80px;top:87.32px;font-size:12.5px;line-height:12.5px;font-weight:normal;color:#000;letter-spacing:0.767px;">Plot</div><div class="t" style="left:14.50px;top:120.42px;font-size:12.5px;line-height:12.5px;font-weight:normal;color:#000;letter-spacing:0.167px;">XY Line</div><div class="t" style="left:8.20px;top:145.42px;font-size:12.5px;line-height:12.5px;font-weight:normal;color:#000;letter-spacing:0.744px;">Show mapping layers</div><div class="t" style="left:43.70px;top:168.42px;font-size:12.5px;line-height:12.5px;font-weight:normal;color:#000;letter-spacing:0.375px;">Lines</div><div class="t" style="left:43.70px;top:194.42px;font-size:12.5px;line-height:12.5px;font-weight:normal;color:#000;letter-spacing:0.433px;">Symbols</div><div class="t" style="left:43.70px;top:220.42px;font-size:12.5px;line-height:12.5px;font-weight:normal;color:#000;letter-spacing:0.967px;">Bars</div><div class="t" style="left:43.70px;top:246.42px;font-size:12.5px;line-height:12.5px;font-weight:normal;color:#000;letter-spacing:0.867px;">Error bars</div><div class="t" style="left:71.00px;top:274.42px;font-size:12.5px;line-height:12.5px;font-weight:normal;color:#000;letter-spacing:0.633px;">Mapping Style...</div><div class="t" style="left:98.50px;top:1066.42px;font-size:12.5px;line-height:12.5px;font-weight:normal;color:#000;letter-spacing:0.500px;">Redraw</div><div class="t" style="left:29.20px;top:1095.22px;font-size:12.5px;line-height:12.5px;font-weight:normal;color:#000;letter-spacing:0.880px;">Auto redraw</div><div class="t" style="left:11.60px;top:1125.32px;font-size:12.5px;line-height:12.5px;font-weight:normal;color:#000;letter-spacing:0.867px;">Plot</div><div class="t" style="left:59.30px;top:1123.92px;font-size:12.5px;line-height:12.5px;font-weight:normal;color:#000;letter-spacing:0.800px;">Pages</div>
</body></html>
